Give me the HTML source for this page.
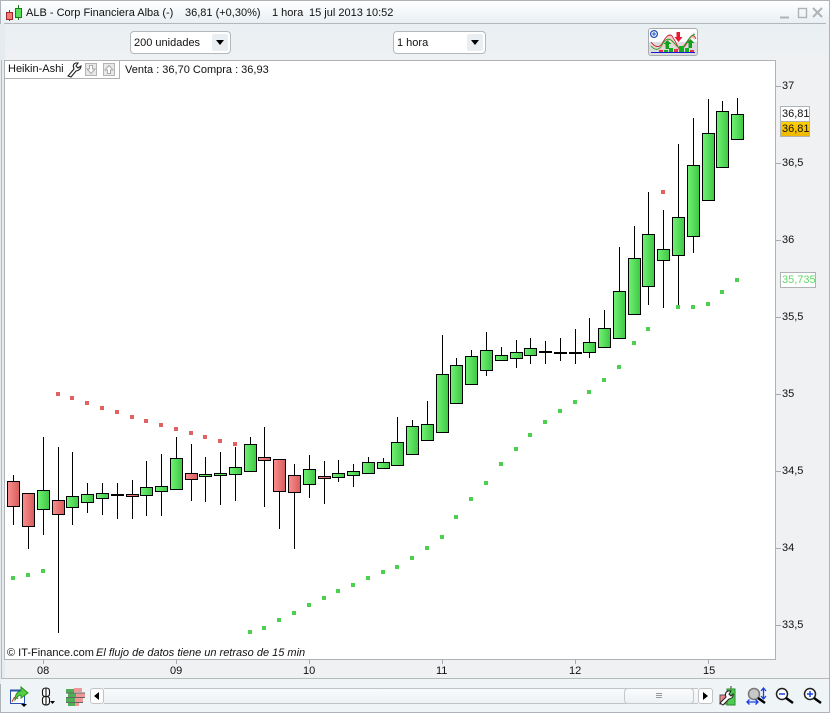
<!DOCTYPE html>
<html><head><meta charset="utf-8">
<style>
html,body{margin:0;padding:0;width:830px;height:713px;overflow:hidden;background:#eff1f3}
body{position:relative;font:11px/14px "Liberation Sans",Arial,sans-serif;color:#111}
.t{position:absolute;white-space:nowrap}
.b{position:absolute;box-sizing:border-box}
.ax{position:absolute;left:782px;white-space:nowrap;line-height:14px}
.tk{position:absolute;left:776px;width:5px;height:1px;background:#a8acb0}
.tx{position:absolute;top:659px;width:1px;height:5px;background:#a8acb0}
.cb{position:absolute;box-sizing:border-box;height:23px;top:31px;background:#fff;border:1px solid #b4b8bc;border-radius:4px}
.cb i{position:absolute;right:2px;top:2px;width:16px;height:17px;background:#e8eef2;border-radius:2px}
.cb i:after{content:"";position:absolute;left:4px;top:6px;border:4px solid transparent;border-top:5px solid #000;border-bottom:0}
</style></head><body>

<!-- window frame -->
<div class="b" style="left:0;top:0;width:830px;height:713px;border:1px solid #aeb3b9;background:#eff1f3"></div>
<div class="b" style="left:1px;top:1px;width:828px;height:22px;background:linear-gradient(#fff,#e9eff3)"></div>
<div class="b" style="left:4px;top:23px;width:822px;height:1px;background:#b3b6ba"></div>
<div class="b" style="left:1px;top:24px;width:828px;height:36px;background:linear-gradient(#e9eff2,#eff1f3)"></div>
<div class="b" style="left:0;top:24px;width:5px;height:660px;background:#e6ebef"></div>
<div class="b" style="left:1px;top:60px;width:1px;height:620px;background:#b4bac0"></div>
<div class="b" style="left:4px;top:60px;width:772px;height:600px;background:#fff;border:1px solid #b0b3b6"></div>
<div class="b" style="left:1px;top:678px;width:828px;height:1px;background:#b6b9bc"></div>
<div class="b" style="left:1px;top:679px;width:828px;height:33px;background:#eff4f6"></div>

<!-- title bar -->
<svg class="b" style="left:5px;top:4px" width="18" height="18" shape-rendering="crispEdges">
<path d="M13.5 1V16" stroke="#1d7a1d"/><path d="M4.5 6V17" stroke="#a02828"/>
<rect x="1.5" y="8.5" width="6" height="7" fill="#f47a7a" stroke="#a02828"/>
<rect x="10.5" y="4.5" width="6" height="9" fill="#55e055" stroke="#1d7a1d"/></svg>
<span class="t" style="left:26px;top:6px">ALB - Corp Financiera Alba (-)</span>
<span class="t" style="left:185px;top:6px">36,81 (+0,30%)</span>
<span class="t" style="left:272px;top:6px">1 hora</span>
<span class="t" style="left:309px;top:6px">15 jul 2013 10:52</span>
<svg class="b" style="left:778px;top:6px" width="48" height="14"><path d="M2 11.500H11" stroke="#b0b3b6" stroke-width="2"/><rect x="20.500" y="2.500" width="8" height="9" fill="none" stroke="#b0b3b6" stroke-width="1.400"/><path d="M35 2L44 11M44 2L35 11" stroke="#b0b3b6" stroke-width="2"/></svg>

<!-- toolbar -->
<div class="cb" style="left:130px;width:101px"><span class="t" style="left:3px;top:4px">200 unidades</span><i></i></div>
<div class="cb" style="left:393px;width:93px"><span class="t" style="left:3px;top:4px">1 hora</span><i></i></div>
<div class="b" style="left:648px;top:28px;width:50px;height:28px;border:1px solid #a8acb0;border-radius:3px;background:linear-gradient(#fff 48%,#dcdcdc 52%)"></div>
<svg class="b" style="left:648px;top:28px" width="50" height="28">
<path d="M4 15L10 22L22 6L30 20L38 14L46 4L47 12L44 10L36 20L30 23L22 12L12 23L4 18Z" fill="#f8c8c0"/>
<path d="M3 14Q9 22 14 16Q20 4 24 8Q28 14 31 21Q36 22 41 11Q45 4 48 11" fill="none" stroke="#c02030" stroke-width=".9"/>
<path d="M3 18Q10 26 15 15Q20 7 27 16Q33 24 38 15Q42 8 47 6" fill="none" stroke="#1aa02a" stroke-width=".9"/>
<circle cx="6" cy="6" r="3.400" fill="#fff" stroke="#2050c0" stroke-width="1.300"/><path d="M6 4V8M4 6H8" stroke="#2050c0"/>
<path d="M17.500 21V16H15.500L19.500 12L23.500 16H21V21ZM40.500 20V15H38.500L42.500 11L46.500 15H44V20Z" fill="#10a020"/>
<path d="M28.500 4V9H26.500L30.500 14L34.500 9H32V4Z" fill="#e81830"/>
<rect x="11" y="22" width="4" height="2" fill="#e83050"/><rect x="16" y="22" width="4" height="2" fill="#10b020"/><rect x="21" y="20" width="4" height="4" fill="#10b020"/><rect x="26" y="21" width="4" height="3" fill="#e83050"/><rect x="31" y="18" width="5" height="6" fill="#10b020"/><rect x="37" y="20" width="4" height="4" fill="#10b020"/><rect x="42" y="22" width="4" height="2" fill="#e83050"/>
<path d="M3 24.500H47" stroke="#1818d8"/></svg>

<!-- chart -->
<svg class="b" style="left:0;top:0" width="830" height="713" shape-rendering="crispEdges">
<defs>
<linearGradient id="g"><stop offset="0" stop-color="#72f274"/><stop offset="1" stop-color="#3dc644"/></linearGradient>
<linearGradient id="r"><stop offset="0" stop-color="#fc8e8e"/><stop offset="1" stop-color="#d65c5c"/></linearGradient>
</defs>
<path fill="#e06262" d="M56 392h4v4h-4zM70 396h4v4h-4zM85 401h4v4h-4zM100 406h4v4h-4zM115 410h4v4h-4zM130 415h4v4h-4zM144 419h4v4h-4zM159 423h4v4h-4zM174 427h4v4h-4zM189 431h4v4h-4zM203 435h4v4h-4zM218 439h4v4h-4zM233 442h4v4h-4zM661 190h4v4h-4z"/>
<path fill="#4dd04f" d="M11 576h4v4h-4zM26 573h4v4h-4zM41 569h4v4h-4zM248 630h4v4h-4zM262 626h4v4h-4zM277 618h4v4h-4zM292 611h4v4h-4zM307 603h4v4h-4zM322 596h4v4h-4zM336 589h4v4h-4zM351 583h4v4h-4zM366 576h4v4h-4zM381 570h4v4h-4zM395 565h4v4h-4zM410 556h4v4h-4zM425 546h4v4h-4zM440 535h4v4h-4zM454 515h4v4h-4zM469 497h4v4h-4zM484 481h4v4h-4zM499 462h4v4h-4zM514 447h4v4h-4zM528 433h4v4h-4zM543 420h4v4h-4zM558 409h4v4h-4zM573 400h4v4h-4zM587 390h4v4h-4zM602 378h4v4h-4zM617 365h4v4h-4zM632 341h4v4h-4zM646 327h4v4h-4zM676 305h4v4h-4zM691 305h4v4h-4zM706 302h4v4h-4zM720 290h4v4h-4zM735 278h4v4h-4z"/>
<path stroke="#000" fill="none" d="M13.500 475V525M28.500 493V549M43.500 437V535M58.500 447V633M72.500 452V525M87.500 483V513M102.500 483V515M117.500 483V519M132.500 480V519M146.500 461V516M161.500 454V516M176.500 437V489M191.500 444V501M205.500 457V502M220.500 452V505M235.500 447V501M250.500 437V471M264.500 427V507M279.500 459V529M294.500 464V549M309.500 455V498M324.500 461V504M338.500 460V482M353.500 464V487M368.500 457V473M383.500 458V468M397.500 417V465M412.500 420V454M427.500 401V440M442.500 335V432M456.500 358V403M471.500 350V384M486.500 332V376M501.500 347V360M516.500 340V368M530.500 338V364M545.500 341V364M560.500 338V361M575.500 329V364M589.500 318V358M604.500 310V347M619.500 247V338M634.500 226V314M648.500 192V305M663.500 210V308M678.500 144V305M693.500 118V253M708.500 99V200M722.500 101V167M737.500 98V139"/>
<g stroke="#000" fill="url(#r)">
<rect x="7.500" y="481.500" width="12" height="25"/><rect x="22.500" y="493.500" width="12" height="33"/><rect x="52.500" y="500.500" width="12" height="14"/><rect x="126.500" y="494.500" width="12" height="2"/><rect x="185.500" y="473.500" width="12" height="6"/><rect x="258.500" y="457.500" width="12" height="3"/><rect x="273.500" y="459.500" width="12" height="32"/><rect x="288.500" y="475.500" width="12" height="17"/><rect x="318.500" y="476.500" width="12" height="2"/>
</g>
<g stroke="#000" fill="#000">
<rect x="111.500" y="494.500" width="12" height="1"/><rect x="539.500" y="351.500" width="12" height="1"/><rect x="554.500" y="352.500" width="12" height="1"/><rect x="569.500" y="352.500" width="12" height="1"/>
</g>
<g stroke="#000" fill="url(#g)">
<rect x="37.500" y="490.500" width="12" height="19"/><rect x="66.500" y="496.500" width="12" height="11"/><rect x="81.500" y="494.500" width="12" height="8"/><rect x="96.500" y="493.500" width="12" height="5"/><rect x="140.500" y="487.500" width="12" height="8"/><rect x="155.500" y="486.500" width="12" height="5"/><rect x="170.500" y="458.500" width="12" height="31"/><rect x="199.500" y="474.500" width="12" height="2"/><rect x="214.500" y="473.500" width="12" height="2"/><rect x="229.500" y="467.500" width="12" height="7"/><rect x="244.500" y="444.500" width="12" height="27"/><rect x="303.500" y="469.500" width="12" height="15"/><rect x="332.500" y="473.500" width="12" height="4"/><rect x="347.500" y="471.500" width="12" height="4"/><rect x="362.500" y="462.500" width="12" height="11"/><rect x="377.500" y="462.500" width="12" height="6"/><rect x="391.500" y="442.500" width="12" height="23"/><rect x="406.500" y="426.500" width="12" height="28"/><rect x="421.500" y="424.500" width="12" height="16"/><rect x="436.500" y="374.500" width="12" height="58"/><rect x="450.500" y="365.500" width="12" height="38"/><rect x="465.500" y="356.500" width="12" height="28"/><rect x="480.500" y="350.500" width="12" height="20"/><rect x="495.500" y="355.500" width="12" height="5"/><rect x="510.500" y="352.500" width="12" height="6"/><rect x="524.500" y="348.500" width="12" height="7"/><rect x="583.500" y="342.500" width="12" height="10"/><rect x="598.500" y="328.500" width="12" height="19"/><rect x="613.500" y="291.500" width="12" height="47"/><rect x="628.500" y="258.500" width="12" height="56"/><rect x="642.500" y="234.500" width="12" height="52"/><rect x="657.500" y="249.500" width="12" height="11"/><rect x="672.500" y="217.500" width="12" height="38"/><rect x="687.500" y="165.500" width="12" height="71"/><rect x="702.500" y="133.500" width="12" height="67"/><rect x="716.500" y="111.500" width="12" height="56"/><rect x="731.500" y="114.500" width="12" height="25"/>
</g>
</svg>

<!-- legend -->
<div class="b" style="left:5px;top:61px;width:115px;height:18px;background:#fff;border-right:1px solid #b0b3b6;border-bottom:1px solid #b0b3b6"></div>
<span class="t" style="left:8px;top:62px">Heikin-Ashi</span>
<svg class="b" style="left:66px;top:61px" width="16" height="17"><path d="M2 15L8 8Q6 3 10 2L12 2L10 5L12 7L15 5Q15 9 10 10L5 16Z" fill="#fff" stroke="#222" stroke-width="1.100"/></svg>
<svg class="b" style="left:84px;top:62px" width="32" height="15"><rect x="1.500" y="1.500" width="11" height="12" fill="#e8e8e8" stroke="#b4b4b4"/><path d="M5.500 3.500H8.500V7H11L7 11.500L3 7H5.500Z" fill="#fff" stroke="#aaa"/><rect x="19.500" y="1.500" width="11" height="12" fill="#e8e8e8" stroke="#b4b4b4"/><path d="M23.500 11.500H26.500V8H29L25 3.500L21 8H23.500Z" fill="#fff" stroke="#aaa"/></svg>
<span class="t" style="left:125px;top:63px">Venta : 36,70 Compra : 36,93</span>
<span class="t" style="left:7px;top:646px">© IT-Finance.com</span>
<span class="t" style="left:96px;top:646px;font-style:italic">El flujo de datos tiene un retraso de 15 min</span>

<!-- right axis -->
<div class="tk" style="top:86px"></div><div class="tk" style="top:163px"></div><div class="tk" style="top:240px"></div><div class="tk" style="top:317px"></div><div class="tk" style="top:394px"></div><div class="tk" style="top:471px"></div><div class="tk" style="top:548px"></div><div class="tk" style="top:625px"></div>
<span class="ax" style="top:79px">37</span><span class="ax" style="top:156px">36,5</span><span class="ax" style="top:233px">36</span><span class="ax" style="top:310px">35,5</span><span class="ax" style="top:387px">35</span><span class="ax" style="top:464px">34,5</span><span class="ax" style="top:541px">34</span><span class="ax" style="top:618px">33,5</span>
<div class="b" style="left:780px;top:106px;width:30px;height:16px;background:#fff;border:1px solid #b0b3b6"></div>
<span class="t" style="left:782px;top:107px">36,81</span>
<div class="b" style="left:780px;top:121px;width:30px;height:16px;background:linear-gradient(#ffd000,#f0b800);border:1px solid #b0b3b6"></div>
<span class="t" style="left:782px;top:122px">36,81</span>
<div class="b" style="left:780px;top:272px;width:36px;height:16px;background:#fff;border:1px solid #b0b3b6"></div>
<span class="t" style="left:782px;top:273px;color:#62d866">35,735</span>

<!-- bottom axis -->
<div class="tx" style="left:43px"></div><div class="tx" style="left:176px"></div><div class="tx" style="left:309px"></div><div class="tx" style="left:442px"></div><div class="tx" style="left:575px"></div><div class="tx" style="left:708px"></div>
<span class="t" style="left:37px;top:664px">08</span><span class="t" style="left:170px;top:664px">09</span><span class="t" style="left:303px;top:664px">10</span><span class="t" style="left:436px;top:664px">11</span><span class="t" style="left:569px;top:664px">12</span><span class="t" style="left:703px;top:664px">15</span>

<!-- bottom toolbar -->
<svg class="b" style="left:8px;top:684px" width="82" height="26">
<rect x="2.500" y="6.500" width="14" height="13" fill="#fff" stroke="#2850b0"/><path d="M2 6.500H17" stroke="#2850b0" stroke-width="2"/>
<path d="M4 18Q7 10 10 15" fill="none" stroke="#d03030"/>
<path d="M7 16Q7 8 13 7V3L20 9L13 14V11Q10 11 7 16Z" fill="#55d040" stroke="#2a9020"/>
<path d="M13 20H19L16 23Z" fill="#000"/>
<path d="M34.500 7Q34.500 4 38 4Q41.500 4 41.500 7V10Q41.500 12.500 38 12.500Q34.500 12.500 34.500 10ZM34.500 15Q34.500 12.500 38 12.500Q41.500 12.500 41.500 15V18Q41.500 21 38 21Q34.500 21 34.500 18Z" fill="#fff" stroke="#111" stroke-width="1.100"/><path d="M38 4V21" stroke="#111" stroke-width="1.100"/>
<path d="M42 17H47L44.500 20Z" fill="#000"/>
<rect x="58" y="5" width="8" height="4" fill="#4fae55"/><rect x="66" y="4" width="8" height="4" fill="#f09898"/>
<rect x="60" y="9" width="8" height="4" fill="#4fae55"/><rect x="68" y="9" width="9" height="4" fill="#f09898"/>
<rect x="58" y="14" width="9" height="4" fill="#4fae55"/><rect x="67" y="14" width="8" height="4" fill="#f09898"/>
<rect x="60" y="19" width="7" height="3" fill="#4fae55"/><rect x="67" y="19" width="4" height="3" fill="#f09898"/>
<path d="M58 9H77M58 13.500H77M58 18.500H75" stroke="#666"/>
</svg>
<div class="b" style="left:90px;top:688px;width:14px;height:16px;background:#fff;border:1px solid #c0c4c8;border-radius:3px"></div>
<svg class="b" style="left:90px;top:688px" width="14" height="16"><path d="M9 4V12L4 8Z" fill="#000"/></svg>
<div class="b" style="left:104px;top:688px;width:594px;height:16px;background:linear-gradient(#f8fafb,#eef2f4);border-top:1px solid #c0c4c8;border-bottom:1px solid #c0c4c8"></div>
<div class="b" style="left:624px;top:688px;width:70px;height:16px;background:linear-gradient(#fafbfc,#eef2f4);border:1px solid #c4c8cc;border-radius:4px"></div>
<svg class="b" style="left:655px;top:692px" width="8" height="8"><path d="M1 1.500H7M1 3.500H7M1 5.500H7" stroke="#999"/></svg>
<div class="b" style="left:698px;top:688px;width:15px;height:16px;background:#fff;border:1px solid #c0c4c8;border-radius:3px"></div>
<svg class="b" style="left:698px;top:688px" width="15" height="16"><path d="M5 4V12L10 8Z" fill="#000"/></svg>

<svg class="b" style="left:718px;top:684px" width="110" height="26">
<path d="M13 2V21" stroke="#333"/><rect x="2" y="11" width="7" height="9" fill="#e88" stroke="#555"/><rect x="9" y="5" width="8" height="16" fill="#4fcb4f" stroke="#2a8a2a"/>
<path d="M2 19L8 13Q6 9 10 7H13L11 10L13 12L15 10Q16 14 11 15L5 21Z" fill="#fff" stroke="#222"/>
<circle cx="36" cy="10" r="5.500" fill="#c8c8c8" stroke="#777" stroke-width="1.500"/>
<path d="M40 14L47 19" stroke="#000" stroke-width="2.500"/>
<path d="M30 18H39M31.500 15.500L29 18L31.500 20.500M37.500 15.500L40 18L37.500 20.500M45.500 5V14M43 7L45.500 4L48 7M43 12L45.500 15L48 12" fill="none" stroke="#1840e0" stroke-width="1.300"/>
<circle cx="64" cy="10" r="5.500" fill="#fff" stroke="#222" stroke-width="1.500"/><path d="M61 10H67" stroke="#1840e0" stroke-width="1.500"/>
<path d="M68 14L75 19" stroke="#000" stroke-width="2.500"/>
<circle cx="92" cy="10" r="5.500" fill="#fff" stroke="#222" stroke-width="1.500"/><path d="M89 10H95M92 7V13" stroke="#1840e0" stroke-width="1.500"/>
<path d="M96 14L103 19" stroke="#000" stroke-width="2.500"/>
</svg>
</body></html>
